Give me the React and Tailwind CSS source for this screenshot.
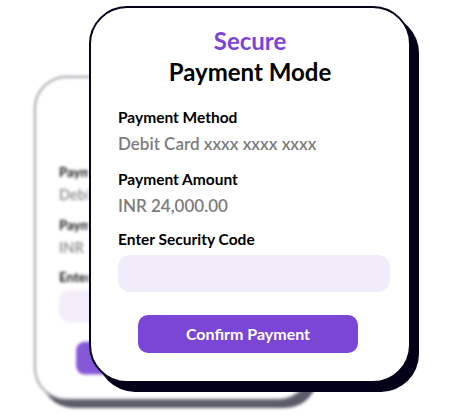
const font = { fontFamily: 'Lato, "Noto Sans", sans-serif' }

// the back card only shows a sliver left of the front card, so its texts are clipped there
function Line({ muted, className, children }) {
  if (!muted) return <div className={className}>{children}</div>
  return <div className={className + ' w-[34px] overflow-hidden whitespace-nowrap'}>{children}</div>
}

function Card({ muted }) {
  return (
    <div
      className={
        'w-[322px] h-[377px] rounded-[38px] bg-white border-2 flex flex-col ' +
        (muted
          ? 'border-[#8a8a96] shadow-[8px_9px_0_#4a4a5a]'
          : 'border-[#06031c] shadow-[8px_9px_0_#03001a]')
      }
    >
      {muted ? (
        <div className="h-[80px]" />
      ) : (
        <div className="pt-[18px] flex flex-col items-center">
          <div className="text-[24px] leading-[30px] font-bold text-[#7b45dc]">Secure</div>
          <div className="text-[24px] leading-[32px] font-bold text-black">Payment Mode</div>
        </div>
      )}
      <div className="pl-[27px] pr-[19px] pt-[18px] flex flex-col">
        <Line muted={muted} className="text-[15.5px] leading-[22px] font-bold text-black">Payment Method</Line>
        <Line muted={muted} className="mt-[5px] text-[17px] leading-[22px] font-semibold text-[#7d7d7d]">Debit Card xxxx xxxx xxxx</Line>
        <Line muted={muted} className="mt-[13px] text-[15.5px] leading-[22px] font-bold text-black">Payment Amount</Line>
        <Line muted={muted} className="mt-[5px] text-[17px] leading-[22px] font-semibold text-[#7d7d7d]">INR 24,000.00</Line>
        <Line muted={muted} className="mt-[11px] text-[15.5px] leading-[22px] font-bold text-black">Enter Security Code</Line>
        <div className="mt-[5px] h-[37px] rounded-[12px] bg-[#f1ecf9]"></div>
        <button className="mt-[23px] ml-[20px] mr-[32px] h-[38px] rounded-[10px] bg-[#7b45d6] text-white text-[16px] font-bold">
          {muted ? '' : 'Confirm Payment'}
        </button>
      </div>
    </div>
  )
}

export default function App() {
  return (
    <div className="relative w-[454px] h-[416px] bg-white overflow-hidden" style={font}>
      <div aria-hidden="true" className="absolute left-[34px] top-[76px] origin-top-left scale-[0.86] blur-[2px] opacity-90">
        <Card muted />
      </div>
      <div className="absolute left-[89px] top-[6px]">
        <Card />
      </div>
    </div>
  )
}
